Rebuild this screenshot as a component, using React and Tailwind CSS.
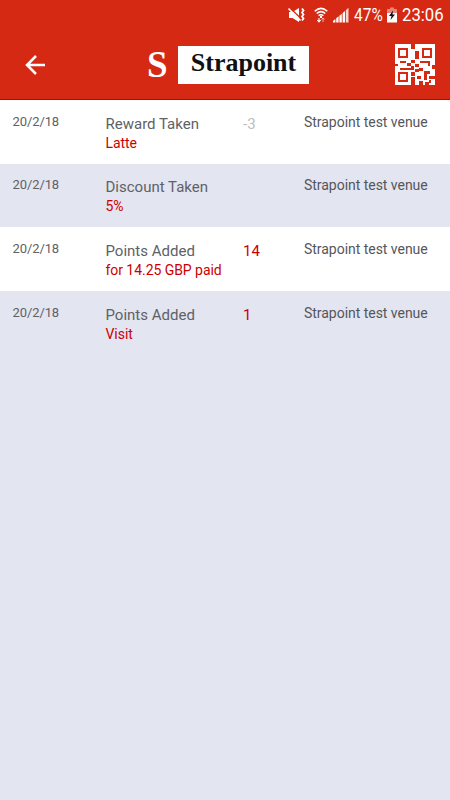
import React from "react";

const rows = [
  { date: "20/2/18", title: "Reward Taken", detail: "Latte", points: "-3", venue: "Strapoint test venue" },
  { date: "20/2/18", title: "Discount Taken", detail: "5%", points: "", venue: "Strapoint test venue" },
  { date: "20/2/18", title: "Points Added", detail: "for 14.25 GBP paid", points: "14", venue: "Strapoint test venue" },
  { date: "20/2/18", title: "Points Added", detail: "Visit", points: "1", venue: "Strapoint test venue" },
];

function MuteIcon() {
  return (
    <svg width="18" height="16" viewBox="0 0 18 16" fill="none" className="ml-[288px]">
      <path d="M1 5h3.500L11 1v14l-6.500-4H1z" fill="#fff" />
      <path d="M1.500 0.500l12 11.500" stroke="#d62914" strokeWidth="1.300" />
      <path d="M0.500 1.500l12 12" stroke="#fff" strokeWidth="1.600" />
      <path d="M14 1.500l1.500 2-1.500 2 1.500 2-1.500 2 1.500 2-1.500 2" stroke="#fff" strokeWidth="1.800" />
    </svg>
  );
}

function WifiIcon() {
  return (
    <svg width="14" height="16" viewBox="0 0 14 16" fill="none" stroke="#fff" className="ml-[8px]">
      <path d="M.7 4.200Q7-1.500 13.300 4.200M2.700 6.500Q7 2.700 11.300 6.500M4.600 8.700Q7 6.800 9.400 8.700" strokeWidth="1.500" />
      <path d="M7 9v2" strokeWidth="2" />
      <path d="M5 11v4M3.300 13L5 15l1.700-2" strokeWidth="1.100" />
      <path d="M9 15v-4M7.500 12.500L9 11l1.500 1.500" strokeWidth="1" opacity=".6" />
    </svg>
  );
}

function SignalIcon() {
  return (
    <svg width="16" height="16" viewBox="0 0 16 16" fill="#fff" className="ml-[5px]">
      <path d="M0 14L2.400 12v3.500H0zM3.200 11.300l2.400-2v6.200H3.200zM6.400 8.700l2.400-2v8.800H6.400zM9.600 6l2.400-2v11.500H9.600z" />
      <path d="M12.800 3.300L15.500 0.800v14.700h-2.700z" opacity=".8" />
    </svg>
  );
}

function BatteryIcon() {
  return (
    <svg width="10" height="16" viewBox="0 0 10 16" className="ml-[4px]">
      <path d="M0 2h3V.5h4V2h3v4H0z" fill="#e98478" />
      <path d="M0 6h10v9.500H0z" fill="#fff" />
      <path d="M6 3.500L2 9h2.500L3.500 13 8 7.500H5.500z" fill="#111" />
    </svg>
  );
}

function QrIcon() {
  return (
    <svg width="40" height="41" viewBox="0 0 40 41" shapeRendering="crispEdges">
      <path d="M0 0h40v41H0z" fill="#fff" />
      <g fill="#d62914">
        <path
          fillRule="evenodd"
          d="M3 4h10v10H3zm2 2v6h6V6zM27 4h10v10H27zm2 2v6h6V6zM3 28h10v10H3zm2 2v6h6v-6z"
        />
        <path d="M16 0h4v5h-4zM20 7h4v8h-4zM5 17h6v2H5zM16 16h4v3h-4zM25 17h10v2H25zM33 19h2v3h-2zM0 20h3v2H0zM12 19h4v3h-4zM20 20h4v3h-4zM5 24h14v2H5zM16 22h3v2h-3zM24 24h4v3h-4zM37 21h3v4h-3zM16 28h4v4h-4zM20 25h4v3h-4zM29 27h6v3h-6zM29 30h3v6h-3zM34 32h6v3h-6zM16 33h4v8h-4zM22 32h4v3h-4zM24 37h4v4h-4zM30 38h4v3h-4zM34 36h2v3h-2z" />
      </g>
    </svg>
  );
}

function Header() {
  return (
    <header className="h-[100px] border-b border-[#cc0000] bg-[#d62914] text-white">
      <div className="flex h-[30px] items-center">
        <MuteIcon />
        <WifiIcon />
        <SignalIcon />
        <span className="ml-[5px] w-[29px] whitespace-nowrap text-[18px] leading-[30px]">
          <span className="inline-block origin-left scale-x-[0.86]">47%</span>
        </span>
        <BatteryIcon />
        <span className="ml-[5px] w-[42px] text-[18px] leading-[30px]">
          <span className="inline-block origin-left scale-x-[0.93]">23:06</span>
        </span>
      </div>
      <div className="flex h-[69px] items-center">
        <svg width="22" height="22" viewBox="0 0 22 22" fill="none" stroke="#fff" strokeWidth="2.500" className="ml-[24px]">
          <path d="M21 11H3M12 2l-9 9 9 9" />
        </svg>
        <span className="ml-[101px] w-[21px] font-['Liberation_Serif',serif] text-[37px] font-bold leading-[42px]">
          S
        </span>
        <div className="ml-[10px] flex h-[38px] w-[131px] justify-center whitespace-nowrap bg-white font-['Liberation_Serif',serif] text-[26px] font-bold leading-[33px] text-[#111]">
          Strapoint
        </div>
        <div className="ml-[86px]">
          <QrIcon />
        </div>
      </div>
    </header>
  );
}

export default function App() {
  return (
    <div className="flex min-h-screen w-[450px] flex-col bg-[#e3e5f1] font-[Roboto,sans-serif]">
      <Header />
      {rows.map((row, i) => (
        <div
          key={i}
          className="grid h-[63.700px] grid-cols-[93px_137.500px_61px_1fr] content-start pl-[12.500px] pt-[13.500px] text-[#606166] odd:bg-[#e3e5f1] even:bg-white"
        >
          <span className="text-[13px] leading-[16px] tracking-[-0.100px]">{row.date}</span>
          <div>
            <div className="text-[15px] leading-[21px]">{row.title}</div>
            <div className="whitespace-nowrap text-[14px] leading-[16px] tracking-[-0.050px] text-[#cc0000]">{row.detail}</div>
          </div>
          <span className={row.points === "-3" ? "text-[15px] leading-[21px] text-[#bdbdbd]" : "text-[15px] leading-[21px] text-[#cc0000]"}>
            {row.points}
          </span>
          <span className="text-[14px] leading-[17px] tracking-[-0.030px] text-[#55565b]">{row.venue}</span>
        </div>
      ))}
    </div>
  );
}
